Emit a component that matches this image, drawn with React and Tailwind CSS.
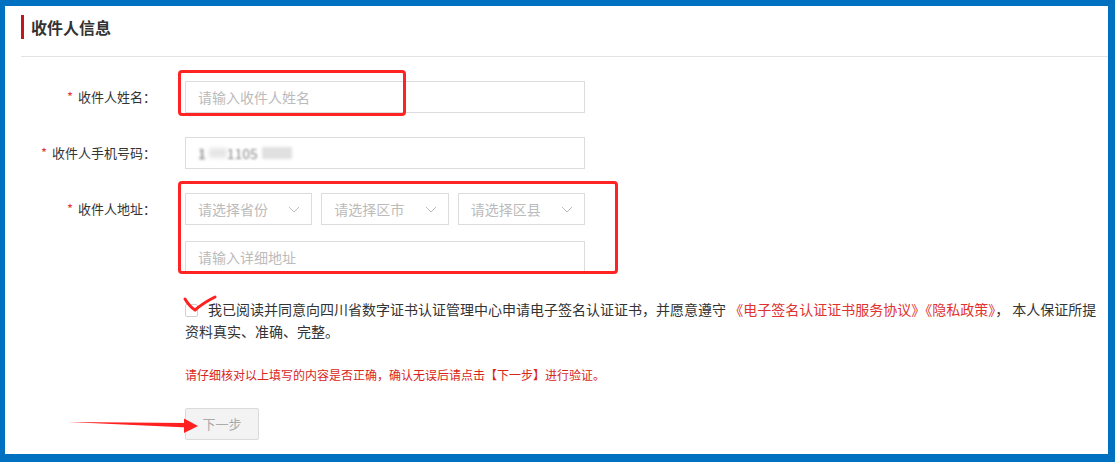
import React from "react";

function Chevron() {
  return (
    <svg width="12" height="7" viewBox="0 0 12 7" fill="none">
      <polyline points="1,1 6,6 11,1" stroke="#bdbdbd" strokeWidth="1" />
    </svg>
  );
}

function Label({ children }) {
  return (
    <div className="w-[151px] mr-[29px] h-[32px] flex items-center justify-end text-[13px] text-[#333]">
      <span className="text-[#e4393c] mr-[5px]">*</span>
      {children}：
    </div>
  );
}

function SelectBox({ text }) {
  return (
    <div className="h-[32px] border border-[#dcdcdc] flex items-center justify-between pl-[12px] pr-[11px] text-[14px] text-[#bbb]">
      <span>{text}</span>
      <Chevron />
    </div>
  );
}

export default function App() {
  return (
    <div className="w-[1115px] h-[462px] bg-[#0070c0] pt-[6px] pl-[5px] pr-[7px] pb-[8px] font-['Noto_Sans_CJK_SC',sans-serif]">
      <div className="relative h-full bg-white overflow-hidden">
        {/* header */}
        <div className="ml-4 pt-[9px] pb-[17px] border-b border-[#e3e3e3]">
          <div className="border-l-[3px] border-[#c0181e] pl-[7px] h-[24px] leading-[24px] text-[16px] font-bold text-[#333]">
            收件人信息
          </div>
        </div>

        {/* form */}
        <div className="pt-[24px]">
          <div className="flex items-start mb-[24px]">
            <Label>收件人姓名</Label>
            <input
              className="w-[400px] h-[32px] border border-[#dcdcdc] px-[12px] text-[14px] outline-none placeholder:text-[#bbb]"
              placeholder="请输入收件人姓名"
            />
          </div>

          <div className="flex items-start mb-[24px]">
            <Label>收件人手机号码</Label>
            <div className="w-[400px] h-[32px] border border-[#dcdcdc] px-[12px] flex items-center text-[14px] text-[#555]">
              <span className="blur-[1.5px]">1</span>
              <span className="ml-[3px] w-[18px] h-[10px] bg-[#e6e6e6] blur-[2px]" />
              <span className="blur-[1.2px] text-[#888]">1105</span>
              <span className="ml-[4px] w-[30px] h-[12px] bg-[#e0e0e0] blur-[1.5px]" />
            </div>
          </div>

          <div className="flex items-start">
            <Label>收件人地址</Label>
            <div className="w-[400px]">
              <div className="grid grid-cols-3 gap-[9px]">
                <SelectBox text="请选择省份" />
                <SelectBox text="请选择区市" />
                <SelectBox text="请选择区县" />
              </div>
              <input
                className="mt-[16px] w-[400px] h-[32px] border border-[#dcdcdc] px-[12px] text-[14px] outline-none placeholder:text-[#bbb]"
                placeholder="请输入详细地址"
              />
            </div>
          </div>

          <div className="ml-[180px] mt-[25px] text-[14px] leading-[22px] text-[#333]">
            <div className="whitespace-nowrap">
              <span className="inline-block align-[-2px] w-[13px] h-[13px] border border-[#cfcfcf] rounded-[2px] bg-white mr-[10px]" />
              我已阅读并同意向四川省数字证书认证管理中心申请电子签名认证证书，并愿意遵守
              <span className="text-[#e0322e]"> 《电子签名认证证书服务协议》《隐私政策》</span>
              ，&nbsp;本人保证所提
            </div>
            <div>资料真实、准确、完整。</div>
          </div>

          <div className="ml-[180px] mt-[23px] text-[12px] leading-[20px] text-[#d9261c]">
            请仔细核对以上填写的内容是否正确，确认无误后请点击【下一步】进行验证。
          </div>

          <button className="ml-[180px] mt-[23px] w-[74px] h-[32px] bg-[#f3f3f3] border border-[#dadada] rounded-[2px] text-[13px] text-[#aaa]">
            下一步
          </button>
        </div>

        {/* red annotations */}
        <div className="absolute left-[173px] top-[64px] w-[228px] h-[46px] border-[3px] border-[#ff2424] rounded-[4px]" />
        <div className="absolute left-[173px] top-[175px] w-[440px] h-[93px] border-[3px] border-[#ff2424] rounded-[4px]" />
        <svg className="absolute left-[176px] top-[286px]" width="42" height="24" viewBox="0 0 42 24">
          <path d="M4 7 Q9 15 14 18 Q22 11 34 5" stroke="#ff2020" strokeWidth="3" fill="none" strokeLinecap="round" />
        </svg>
        <svg className="absolute left-[55px] top-[406px]" width="145" height="25" viewBox="0 0 145 25">
          <path d="M8 10 L128 11 L128 15.5 Z" fill="#ff2020" />
          <path d="M124 6.5 L138 14 L124 21 Z" fill="#ff2020" />
        </svg>
      </div>
    </div>
  );
}
